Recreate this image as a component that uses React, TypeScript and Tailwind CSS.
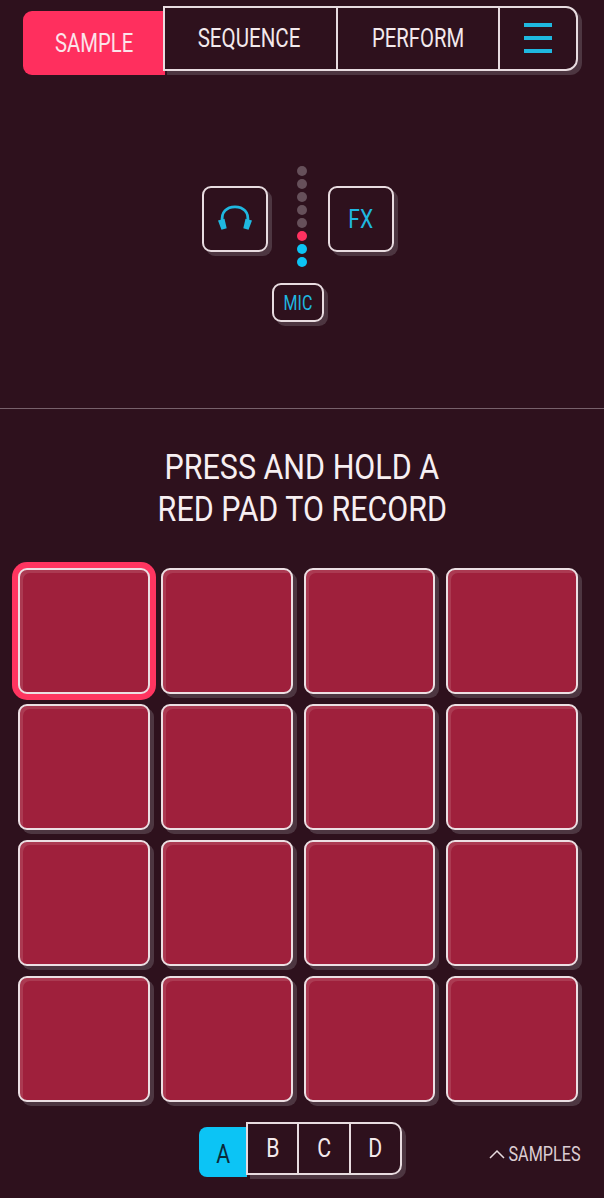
const FONT = "font-['Roboto',sans-serif] font-normal";
const SHADOW = "shadow-[4px_4px_0_#4d3641]";

const meterDots = [
  "bg-[#66505a]",
  "bg-[#66505a]",
  "bg-[#66505a]",
  "bg-[#66505a]",
  "bg-[#66505a]",
  "bg-[#ff3260]",
  "bg-[#0cc4f5]",
  "bg-[#0cc4f5]",
];

function Label({ text, className }: { text: string; className: string }) {
  return <span className={`inline-block whitespace-nowrap ${className}`}>{text}</span>;
}

function Pad({ active }: { active?: boolean }) {
  return (
    <div
      className={`h-[126px] rounded-[9px] border-2 border-[#ecdfe3] bg-[#9f203c] ${
        active
          ? "shadow-[inset_3px_3px_0_#ab3a52,0_0_0_6px_#ff3560]"
          : "shadow-[inset_3px_3px_0_#ab3a52,4px_4px_0_#4d3641]"
      }`}
    />
  );
}

function Headphones() {
  return (
    <svg width="36" height="28" viewBox="0 0 36 28" fill="none">
      <path d="M5.500 17C3.500 7 10 1.800 18 1.800s14.500 5.200 12.500 15.200" stroke="#1fb8e0" strokeWidth="2.800" />
      <path d="M1 15.500l6.500-1.800 2.200 9.500-5.200 1.600z" fill="#1fb8e0" />
      <path d="M35 15.500l-6.500-1.800-2.200 9.500 5.200 1.600z" fill="#1fb8e0" />
    </svg>
  );
}

export default function App() {
  return (
    <div className={`flex h-[1198px] w-[604px] flex-col overflow-hidden bg-[#2e111d] ${FONT}`}>
      {/* top tabs */}
      <div className="flex items-start pl-[23px] pt-[6px]">
        <div className="mt-[5px] flex h-[64px] w-[142px] items-center justify-center rounded-l-[9px] bg-[#ff2f5e]">
          <Label text="SAMPLE" className="scale-x-[.78] text-[26px] text-[#fbe4ea]" />
        </div>
        <div className={`-ml-[2px] flex h-[65px] w-[415px] rounded-r-[12px] border-2 border-[#e8dce0] ${SHADOW}`}>
          <div className="flex w-[171px] items-center justify-center pb-[1px] pr-[3px]">
            <Label text="SEQUENCE" className="scale-x-[.79] text-[26px] text-[#f3e9ec]" />
          </div>
          <div className="flex w-[164px] items-center justify-center border-x-2 border-[#e8dce0]">
            <Label text="PERFORM" className="scale-x-[.78] text-[26px] text-[#f3e9ec]" />
          </div>
          <div className="flex flex-1 flex-col items-center justify-center gap-[9px] pb-[2px]">
            <div className="h-[4px] w-[28px] bg-[#1fb8e0]" />
            <div className="h-[4px] w-[28px] bg-[#1fb8e0]" />
            <div className="h-[4px] w-[28px] bg-[#1fb8e0]" />
          </div>
        </div>
      </div>

      {/* monitor and level */}
      <div className="flex h-[334px] flex-col border-b border-[#77616b] pl-[202px]">
        <div className="flex items-start pt-[91px]">
          <div className={`mt-[20px] flex h-[66px] w-[66px] items-center justify-center rounded-[9px] border-2 border-[#e8dce0] ${SHADOW}`}>
            <Headphones />
          </div>
          <div className="ml-[29px] flex w-[10px] flex-col gap-[3px]">
            {meterDots.map((c, i) => (
              <div key={i} className={`h-[10px] w-[10px] rounded-full ${c}`} />
            ))}
          </div>
          <div className={`ml-[21px] mt-[20px] flex h-[66px] w-[66px] items-center justify-center rounded-[9px] border-2 border-[#e8dce0] pt-[1px] ${SHADOW}`}>
            <Label text="FX" className="scale-x-[.84] text-[25px] text-[#1fb8e0]" />
          </div>
        </div>
        <div className={`ml-[70px] mt-[16px] flex h-[39px] w-[52px] items-center justify-center rounded-[9px] border-2 border-[#e8dce0] ${SHADOW}`}>
          <Label text="MIC" className="scale-x-[.8] text-[20px] text-[#1fb8e0]" />
        </div>
      </div>

      {/* hint */}
      <div className="flex h-[159px] flex-col items-center pt-[38px] text-[35px] leading-[42px] text-[#f7eff2]">
        <Label text="PRESS AND HOLD A" className="scale-x-[.87]" />
        <Label text="RED PAD TO RECORD" className="scale-x-[.87]" />
      </div>

      {/* pads */}
      <div className="grid grid-cols-4 gap-x-[11px] gap-y-[10px] pl-[18px] pr-[26px]">
        {Array.from({ length: 16 }).map((_, i) => (
          <Pad key={i} active={i === 0} />
        ))}
      </div>

      {/* banks */}
      <div className="flex items-start pl-[199px] pt-[20px]">
        <div className="mt-[5px] flex h-[50px] w-[48px] items-center justify-center rounded-l-[8px] bg-[#0cc4f5] pt-[5px]">
          <Label text="A" className="scale-x-[.85] text-[25px] text-[#0a2a3a]" />
        </div>
        <div className={`-ml-[1px] flex h-[53px] w-[156px] rounded-r-[10px] border-2 border-[#e8dce0] ${SHADOW}`}>
          <div className="flex w-[49px] items-center justify-center">
            <Label text="B" className="scale-x-[.85] text-[25px] text-[#f3e9ec]" />
          </div>
          <div className="flex w-[54px] items-center justify-center border-x-2 border-[#e8dce0]">
            <Label text="C" className="scale-x-[.85] text-[25px] text-[#f3e9ec]" />
          </div>
          <div className="flex flex-1 items-center justify-center">
            <Label text="D" className="scale-x-[.85] text-[25px] text-[#f3e9ec]" />
          </div>
        </div>
        <div className="ml-[87px] mt-[17px] flex items-center">
          <svg width="16" height="10" viewBox="0 0 16 10" fill="none">
            <path d="M1 9l7-7 7 7" stroke="#e8dce0" strokeWidth="1.500" />
          </svg>
          <div className="flex w-[78px] justify-center pl-[1px]">
            <Label text="SAMPLES" className="scale-x-[.81] text-[20px] text-[#dccdd3]" />
          </div>
        </div>
      </div>
    </div>
  );
}
